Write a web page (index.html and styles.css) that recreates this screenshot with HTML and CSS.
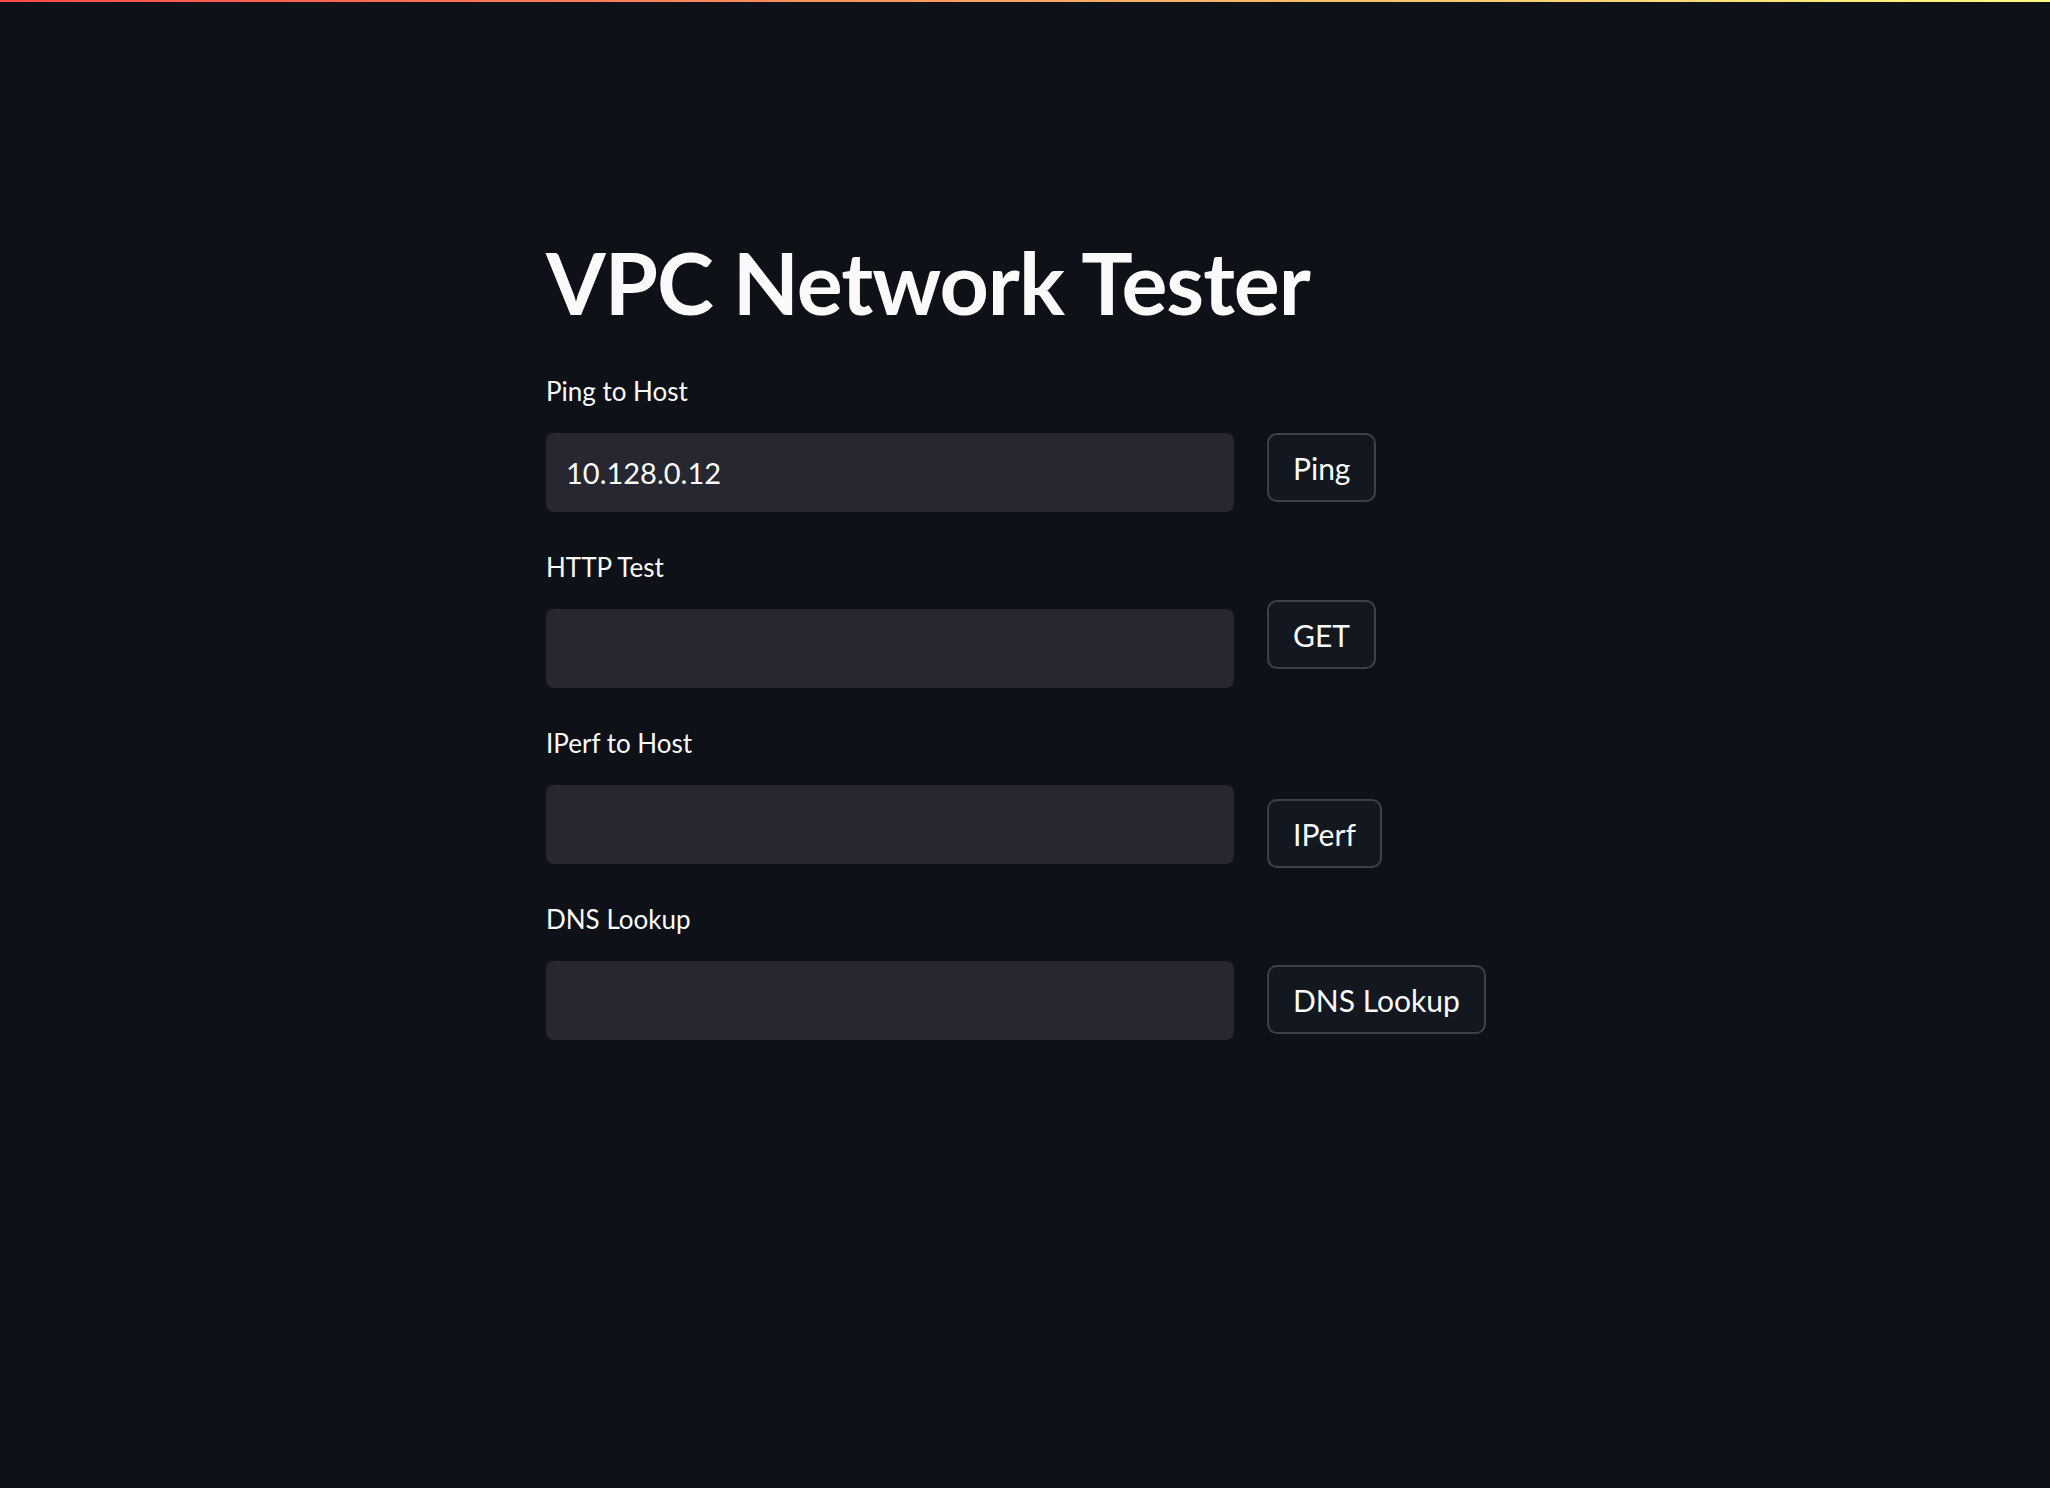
FILE: index.html
```html
<!DOCTYPE html>
<html lang="en">
<head>
<meta charset="utf-8">
<title>VPC Network Tester</title>
<link rel="stylesheet" href="styles.css">
</head>
<body>
<div class="decoration"></div>
<main class="page">
  <div class="container">
    <h1 class="title">VPC Network Tester</h1>
    <div class="form">
      <div class="row">
        <div class="field">
          <label class="label">Ping to Host</label>
          <div class="input">10.128.0.12</div>
        </div>
        <div class="btn-cell btn-cell--ping"><button class="btn">Ping</button></div>
      </div>
      <div class="row">
        <div class="field">
          <label class="label">HTTP Test</label>
          <div class="input"></div>
        </div>
        <div class="btn-cell btn-cell--get"><button class="btn">GET</button></div>
      </div>
      <div class="row">
        <div class="field">
          <label class="label">IPerf to Host</label>
          <div class="input"></div>
        </div>
        <div class="btn-cell btn-cell--iperf"><button class="btn">IPerf</button></div>
      </div>
      <div class="row">
        <div class="field">
          <label class="label">DNS Lookup</label>
          <div class="input"></div>
        </div>
        <div class="btn-cell btn-cell--dns"><button class="btn">DNS Lookup</button></div>
      </div>
    </div>
  </div>
</main>
</body>
</html>
```
FILE: styles.css
```css
html, body {
  margin: 0;
  padding: 0;
  background: #0e1117;
  height: 100%;
}
body {
  font-family: Lato, "Open Sans", sans-serif;
  color: #fafafa;
  overflow: hidden;
}
.decoration {
  height: 2px;
  background: linear-gradient(90deg, #ff4b4b, #fffd80);
}
.page {
  padding-top: 228px;
}
.container {
  width: 958px;
  margin: 0 auto;
}
.title {
  margin: 0 0 36px 0;
  font-size: 86px;
  line-height: 104px;
  font-weight: 700;
  letter-spacing: -1px;
}
.form {
  display: flex;
  flex-direction: column;
  gap: 34px;
}
.row {
  display: grid;
  grid-template-columns: 688px auto;
  column-gap: 33px;
  align-items: start;
  justify-content: start;
}
.field {
  display: flex;
  flex-direction: column;
}
.label {
  font-size: 26px;
  line-height: 42px;
  height: 42px;
  margin-bottom: 21px;
}
.input {
  height: 79px;
  box-sizing: border-box;
  background: #262730;
  border-radius: 8px;
  padding: 0 20px;
  display: flex;
  align-items: center;
  font-size: 29px;
  color: #fafafa;
}
.btn-cell--ping { margin-top: 63px; }
.btn-cell--get { margin-top: 54px; }
.btn-cell--iperf { margin-top: 77px; margin-bottom: -4px; }
.btn-cell--dns { margin-top: 67px; }
.btn {
  height: 69px;
  box-sizing: border-box;
  padding: 0 24px;
  background: #131720;
  border: 2px solid #3f414a;
  border-radius: 10px;
  color: #fafafa;
  font-family: Lato, "Open Sans", sans-serif;
  font-size: 30px;
  line-height: 1;
}
```
